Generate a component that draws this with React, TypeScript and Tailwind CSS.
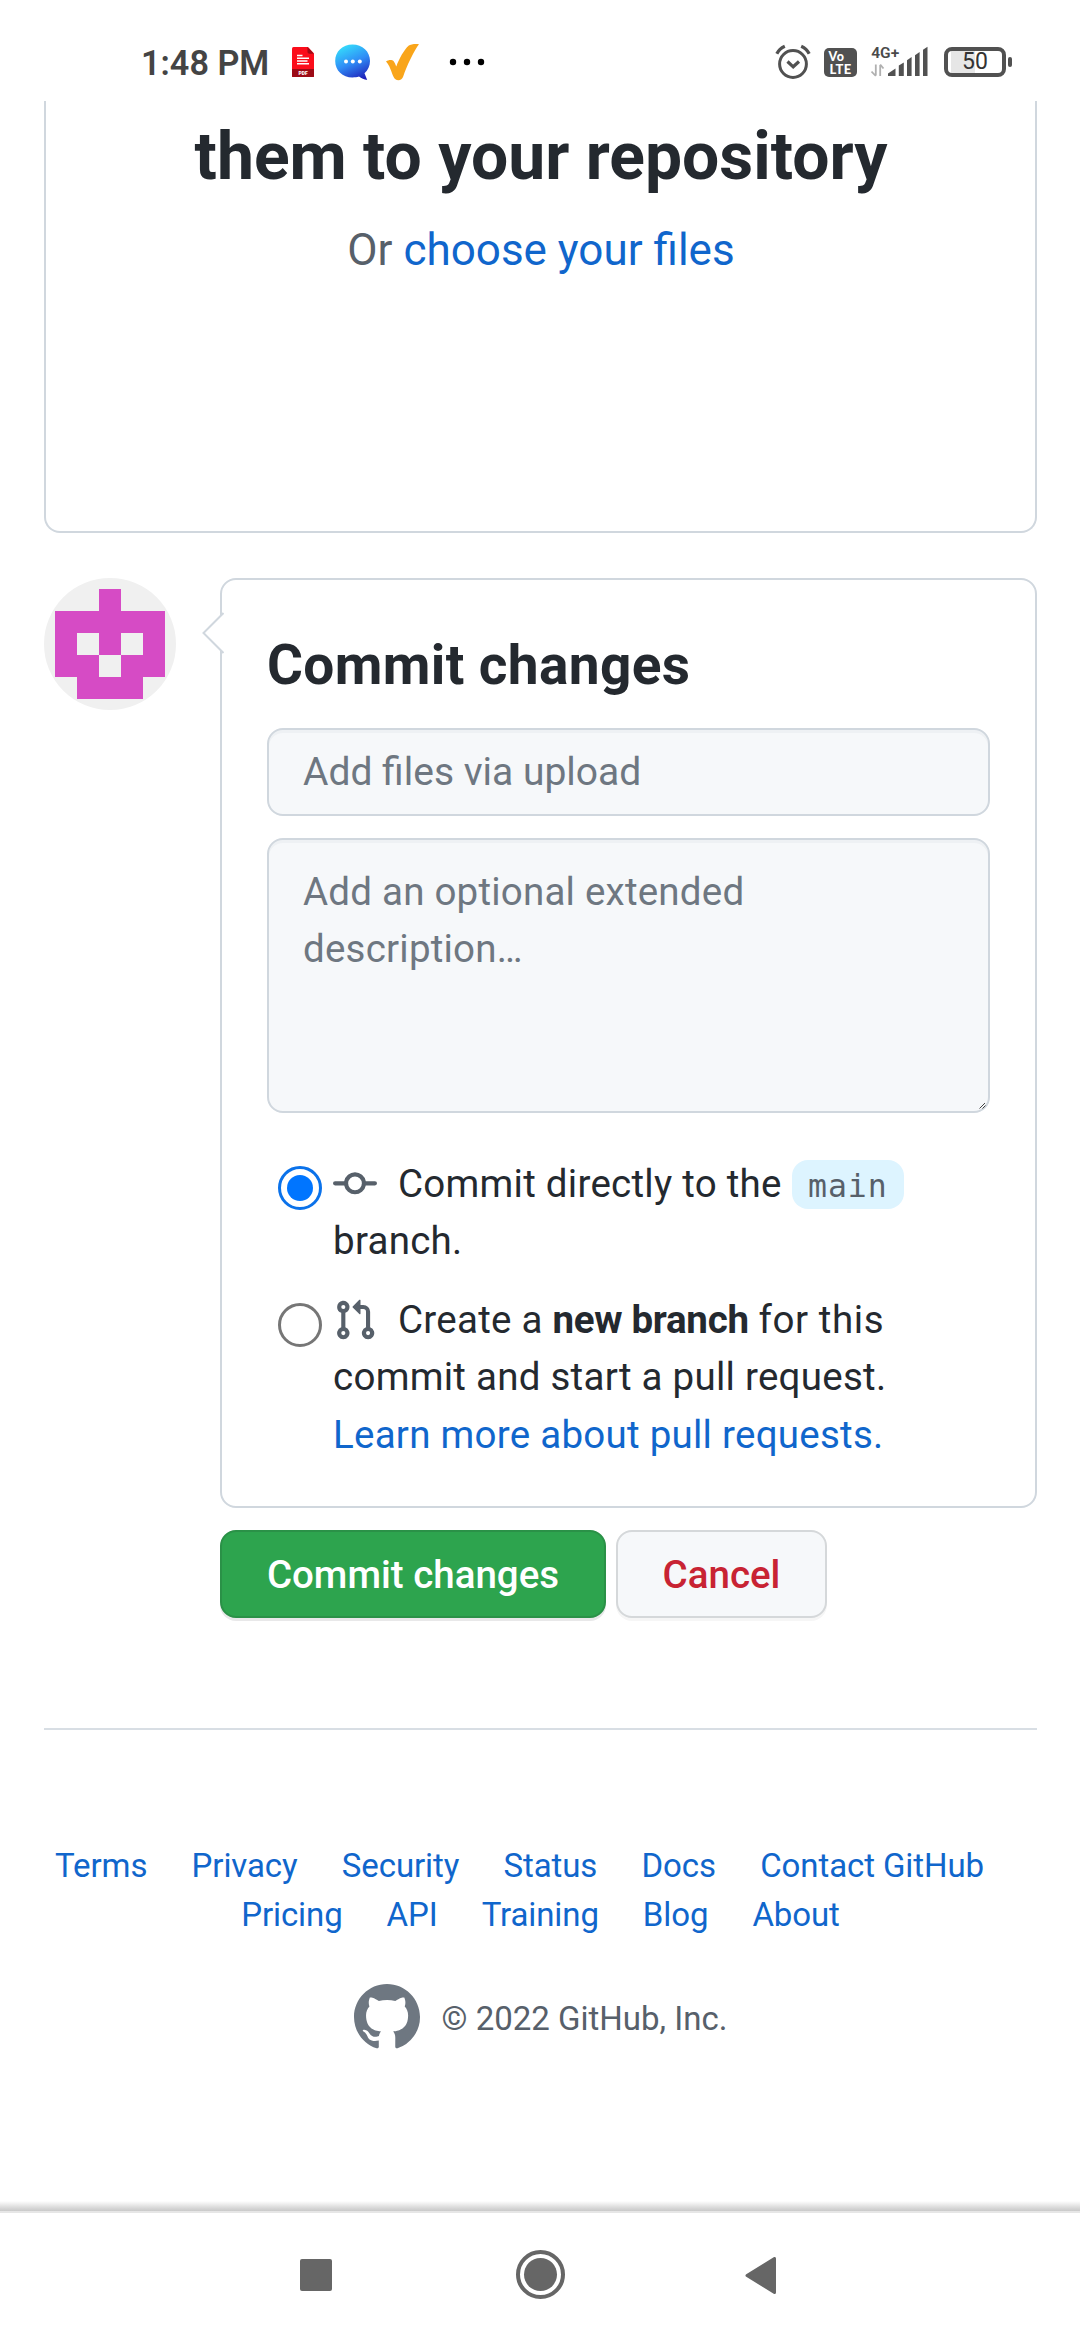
import React from "react";

function Alarm() {
  return (
    <svg width="36" height="36" viewBox="0 0 36 36" fill="none" stroke="#515151">
      <circle cx="18" cy="20" r="13.4" strokeWidth="3" />
      <path d="M12.5 17.5 18.2 22.8 24 17.5" strokeWidth="3.2" />
      <path d="M1.8 9.8C3.4 6.4 6.2 3.8 9.8 2.2" strokeWidth="3.2" />
      <path d="M34.2 9.8C32.6 6.4 29.8 3.8 26.2 2.2" strokeWidth="3.2" />
    </svg>
  );
}

function Volte() {
  return (
    <div className="flex h-[29px] w-[33px] flex-col items-center rounded-[5px] bg-[#515151] pt-[3px] font-['Lato'] text-[12.5px] leading-[12px] font-black text-white">
      <span className="-ml-[8px] tracking-[0.6px]">Vo</span>
      <span className="tracking-[0.4px] text-[13px]">LTE</span>
    </div>
  );
}

function Signal() {
  return (
    <svg width="58" height="34" viewBox="0 0 58 34">
      <text x="0.2" y="12.6" fontFamily="Roboto" fontSize="15" fontWeight="600" fill="#4a4a4a" textLength="28" lengthAdjust="spacingAndGlyphs">4G+</text>
      <path d="M4.8 19.5V30.5M4.8 31L0.5 26.5M9.2 31V20M9.2 19.5L12.5 23.5" stroke="#b0b0b0" strokeWidth="1.8" fill="none" />
      <g fill="#515151">
        <path d="M17 31V28.5L24.5 23.6V31Z" />
        <path d="M27.8 31V20.6L32.8 17.4V31Z" />
        <path d="M36 31V15.2L40.6 12V31Z" />
        <path d="M44 31V10.2L48.6 7V31Z" />
        <path d="M52 31V4.8L56.5 1.8V31Z" />
      </g>
    </svg>
  );
}

function Battery() {
  return (
    <div className="flex items-center">
      <div className="flex h-[30px] w-[62px] items-center justify-center rounded-[8px] border-[4px] border-[#515151] bg-[linear-gradient(90deg,#fff_3px,#e6e6e6_3px,#e6e6e6_27px,#fff_27px)]">
        <span className="text-[23px] leading-[22px] text-[#333]">50</span>
      </div>
      <div className="ml-[2px] h-[10px] w-[4px] rounded-[2px] bg-[#515151]" />
    </div>
  );
}

function StatusBar() {
  return (
    <header className="flex h-[101px] shrink-0 items-start pl-[141px]">
      <div className="mt-[43px] w-[151px] text-[34.2px] leading-[40px] font-semibold whitespace-nowrap text-[#444]">1:48 PM</div>
      <svg className="mt-[47px]" width="22" height="30" viewBox="0 0 22 30">
        <path d="M1.5 0H16L22 6.5V30H0V1.5Q0 0 1.5 0Z" fill="#fb0d1b" />
        <path d="M15.5 0 22 6.7H17.5Q15.5 6.7 15.5 5Z" fill="#a00b16" />
        <path d="M0 22H22V29Q22 30 21 30H1Q0 30 0 29Z" fill="#9c0b16" />
        <path d="M5 8.4H10.5M5 11.2H17M5 14H15.5M5 16.8H17" stroke="#fff" strokeWidth="1.5" />
        <text x="6.6" y="27.6" fontFamily="Roboto" fontWeight="900" fontSize="5" fill="#fff">PDF</text>
      </svg>
      <svg className="mt-[44px] ml-[21px]" width="36" height="37" viewBox="0 0 36 37">
        <defs>
          <linearGradient id="bubble" x1="0.3" y1="0" x2="0.75" y2="1">
            <stop offset="0" stopColor="#35dcfb" />
            <stop offset="0.5" stopColor="#2f8cf6" />
            <stop offset="1" stopColor="#1f1fb8" />
          </linearGradient>
        </defs>
        <path d="M17.5 0.5C27.5 0.5 35 7.5 35 17C35 22 33 26 29.5 29.2L32.2 36C29 35.6 26.5 34.5 24 32.6C22 33.3 20 33.5 17.5 33.5C7.5 33.5 0.2 26.5 0.2 17C0.2 7.5 7.5 0.5 17.5 0.5Z" fill="url(#bubble)" />
        <g fill="#fff"><circle cx="11" cy="17.5" r="2" /><circle cx="17.8" cy="17.5" r="2" /><circle cx="24.8" cy="17.5" r="2" /></g>
      </svg>
      <svg className="mt-[44px] ml-[15px]" width="33" height="37" viewBox="0 0 33 37">
        <path d="M0 17.5C2.5 15.5 6 15.5 7.5 17C9 18.8 9.5 21 10.3 22.5C13 15 18 6 22.5 1.8C24.5 0.2 29.5-0.3 33 0.2C28.5 6 20.5 22 17.2 32.5C16.5 34.8 14.5 36.2 12.5 36.2C10 36.2 8.5 35 7.5 32.8C5.5 28 3.5 21 0 17.5Z" fill="#f9a51a" />
      </svg>
      <svg className="mt-[58px] ml-[30px]" width="36" height="8" viewBox="0 0 36 8">
        <circle cx="4" cy="4" r="3.2" /><circle cx="18" cy="4" r="3.2" /><circle cx="32" cy="4" r="3.2" />
      </svg>
      <div className="mt-[44px] ml-[290px]"><Alarm /></div>
      <div className="mt-[48px] ml-[13px]"><Volte /></div>
      <div className="mt-[45px] ml-[14px]"><Signal /></div>
      <div className="mt-[47px] ml-[15px]"><Battery /></div>
    </header>
  );
}

function Avatar() {
  return (
    <svg className="shrink-0 rounded-full" width="132" height="132" viewBox="0 0 132 132">
      <rect width="132" height="132" fill="#f0f0f0" />
      <path fill="#d64bc5" fillRule="evenodd" d="M55 11H77V33H121V99H99V121H33V99H11V33H55ZM33 55V77H55V55ZM77 55V77H99V55ZM55 77V99H77V77Z" />
    </svg>
  );
}

function Radio({ checked = false }: { checked?: boolean }) {
  return checked ? (
    <span className="mt-[11px] flex size-[44px] shrink-0 items-center justify-center rounded-full border-[3px] border-[#0b72ea]">
      <span className="size-[26px] rounded-full bg-[#0075ff]" />
    </span>
  ) : (
    <span className="mt-[12px] size-[44px] shrink-0 rounded-full border-[3px] border-[#767676]" />
  );
}

const icon = "mr-[21px] inline-block size-[44px] fill-[#57606a] align-text-bottom";

const rows = [
  ["Terms", "Privacy", "Security", "Status", "Docs", "Contact GitHub"],
  ["Pricing", "API", "Training", "Blog", "About"],
];

export default function App() {
  return (
    <div className="flex h-[2340px] w-[1080px] flex-col overflow-hidden bg-white font-['Roboto',sans-serif] text-[38.5px] leading-[57.75px] text-[#24292f]">
      <StatusBar />
      <main className="flex flex-1 flex-col pr-[43px] pl-[44px]">
        <section className="flex h-[432px] flex-col items-center rounded-b-[16px] border-2 border-t-0 border-[#d0d7de] pt-[6px] pl-[1px]">
          <h2 className="text-[66px] leading-[99px] font-bold">them to your repository</h2>
          <p className="mt-[11px] text-[44px] leading-[66px] text-[#57606a]">
            Or <a className="text-[#1066cc]">choose your files</a>
          </p>
        </section>

        <div className="mt-[45px] flex justify-between">
          <Avatar />
          <section className="relative h-[930px] w-[817px] rounded-[16px] border-2 border-[#d0d7de] px-[45px] pt-[44px]">
            <svg className="absolute top-[31px] -left-[20px]" width="22" height="44" viewBox="0 0 22 44">
              <path d="M22 1.5 1.5 22 22 42.5Z" fill="#fff" />
              <path d="M21.5 2 1.5 22 21.5 42" fill="none" stroke="#d0d7de" strokeWidth="2" />
            </svg>
            <h3 className="text-[55px] leading-[82px] font-bold tracking-[0.37px]">Commit changes</h3>
            <div className="mt-[22px] h-[88px] rounded-[16px] border-2 border-[#d0d7de] bg-[#f6f8fa] pt-[14px] pl-[34px] text-[39px] text-[#6e7781] shadow-[inset_0_3px_0_rgba(208,215,222,0.2)]">
              Add files via upload
            </div>
            <div className="relative mt-[22px] h-[275px] rounded-[16px] border-2 border-[#d0d7de] bg-[#f6f8fa] pt-[23px] pr-[180px] pl-[34px] leading-[57.25px] tracking-[0.22px] text-[#6e7781] shadow-[inset_0_3px_0_rgba(208,215,222,0.2)]">
              Add an optional extended description…
              <svg className="absolute right-[2px] bottom-[2px]" width="7" height="6" viewBox="0 0 7 6" stroke="#444" strokeWidth="1">
                <path d="M0.5 5.5 6 0M3.5 5.5 6.5 2.5" />
              </svg>
            </div>
            <div className="mt-[42px] flex pl-[11px] leading-[57.25px] tracking-[0.26px]">
              <Radio checked />
              <p className="ml-[11px] h-[116px] w-[640px]">
                <svg className={icon} viewBox="0 0 16 16">
                  <path fillRule="evenodd" d="M10.5 7.75a2.5 2.5 0 11-5 0 2.5 2.5 0 015 0zm1.43.75a4.002 4.002 0 01-7.86 0H.75a.75.75 0 110-1.5h3.32a4.001 4.001 0 017.86 0h3.32a.75.75 0 110 1.5h-3.32z" />
                </svg>
                Commit directly to the{" "}
                <span className="rounded-[16px] bg-[#ddf4ff] px-[16.5px] pt-[8px] pb-[5px] font-['DejaVu_Sans_Mono',monospace] text-[31.5px] leading-[40px] tracking-[0.9px] text-[#57606a]">main</span>{" "}
                branch.
              </p>
            </div>
            <div className="mt-[20px] flex pl-[11px] leading-[57.25px] tracking-[0.26px]">
              <Radio />
              <p className="ml-[11px] w-[600px]">
                <svg className={icon} viewBox="0 0 16 16">
                  <path fillRule="evenodd" d="M7.177 3.073L9.573.677A.25.25 0 0110 .854v4.792a.25.25 0 01-.427.177L7.177 3.427a.25.25 0 010-.354zM3.75 2.5a.75.75 0 100 1.5.75.75 0 000-1.5zm-2.25.75a2.25 2.25 0 113 2.122v5.256a2.251 2.251 0 11-1.5 0V5.372A2.25 2.25 0 011.5 3.25zM11 2.5h-1V4h1a1 1 0 011 1v5.628a2.251 2.251 0 101.5 0V5A2.5 2.5 0 0011 2.5zm1 10.25a.75.75 0 111.5 0 .75.75 0 01-1.5 0zM3.75 12a.75.75 0 100 1.5.75.75 0 000-1.5z" />
                </svg>
                Create a <b className="font-bold tracking-[-0.3px]">new branch</b> <span className="tracking-[0.6px]">for this</span> commit and start a pull request.{" "}
                <a className="whitespace-nowrap text-[#1066cc]">Learn more about pull requests.</a>
              </p>
            </div>
          </section>
        </div>

        <div className="mt-[22px] flex gap-[10px] pl-[176px] font-medium">
          <button className="h-[88px] w-[386px] rounded-[16px] border-2 border-[#2a9147] bg-[#2da44e] pt-[1px] text-white shadow-[0_3px_0_rgba(27,31,36,0.1)]">Commit changes</button>
          <button className="h-[88px] w-[211px] rounded-[16px] border-2 border-[#d5d8da] bg-[#f6f8fa] pt-[1px] text-[#c82333] shadow-[0_3px_0_rgba(27,31,36,0.04)]">Cancel</button>
        </div>

        <hr className="mt-[110px] border-t-[2px] border-[#d8dee4]" />

        <footer className="mt-[111px] text-[33px] leading-[49px]">
          <nav className="tracking-[-0.1px] text-[#1066cc]">
            <ul className="flex justify-center gap-[44.3px] pr-[42px]">
              {rows[0].map((t) => <li key={t}>{t}</li>)}
            </ul>
            <ul className="flex justify-center gap-[44px]">
              {rows[1].map((t) => <li key={t}>{t}</li>)}
            </ul>
          </nav>
          <div className="mt-[45px] flex items-center justify-center gap-[22px] text-[#57606a]">
            <svg className="size-[66px] fill-[#6e7781]" viewBox="0 0 16 16">
              <path fillRule="evenodd" d="M8 0C3.58 0 0 3.58 0 8c0 3.54 2.29 6.53 5.47 7.59.4.07.55-.17.55-.38 0-.19-.01-.82-.01-1.49-2.01.37-2.53-.49-2.69-.94-.09-.23-.48-.94-.82-1.13-.28-.15-.68-.52-.01-.53.63-.01 1.08.58 1.23.82.72 1.21 1.87.87 2.33.66.07-.52.28-.87.51-1.07-1.78-.2-3.64-.89-3.64-3.95 0-.87.31-1.59.82-2.15-.08-.2-.36-1.02.08-2.12 0 0 .67-.21 2.2.82.64-.18 1.32-.27 2-.27.68 0 1.36.09 2 .27 1.53-1.04 2.2-.82 2.2-.82.44 1.1.16 1.92.08 2.12.51.56.82 1.27.82 2.15 0 3.07-1.87 3.75-3.65 3.95.29.25.54.73.54 1.48 0 1.07-.01 1.93-.01 2.2 0 .21.15.46.55.38A8.013 8.013 0 0016 8c0-4.42-3.58-8-8-8z" />
            </svg>
            <span className="mt-[3px]">© 2022 GitHub, Inc.</span>
          </div>
        </footer>
      </main>

      <div className="h-[12px] shrink-0 bg-[linear-gradient(180deg,#fff_0px,#d2d2d2_8px,#c9c9c9_10px,#e6e6e6_10px,#e6e6e6_12px)]" />
      <nav className="flex h-[127px] shrink-0 items-start bg-white pl-[300px]">
        <div className="mt-[46px] size-[32px] rounded-[2px] bg-[#666]" />
        <svg className="mt-[37px] ml-[184px]" width="49" height="49" viewBox="0 0 49 49">
          <circle cx="24.5" cy="24.5" r="22.5" fill="none" stroke="#666" strokeWidth="4" />
          <circle cx="24.5" cy="24.5" r="16.5" fill="#666" />
        </svg>
        <svg className="mt-[44px] ml-[180px]" width="31" height="37" viewBox="0 0 31 37">
          <path d="M2 18.5 29.5 1.5V35.5Z" fill="#666" stroke="#666" strokeWidth="3" strokeLinejoin="round" />
        </svg>
      </nav>
    </div>
  );
}
